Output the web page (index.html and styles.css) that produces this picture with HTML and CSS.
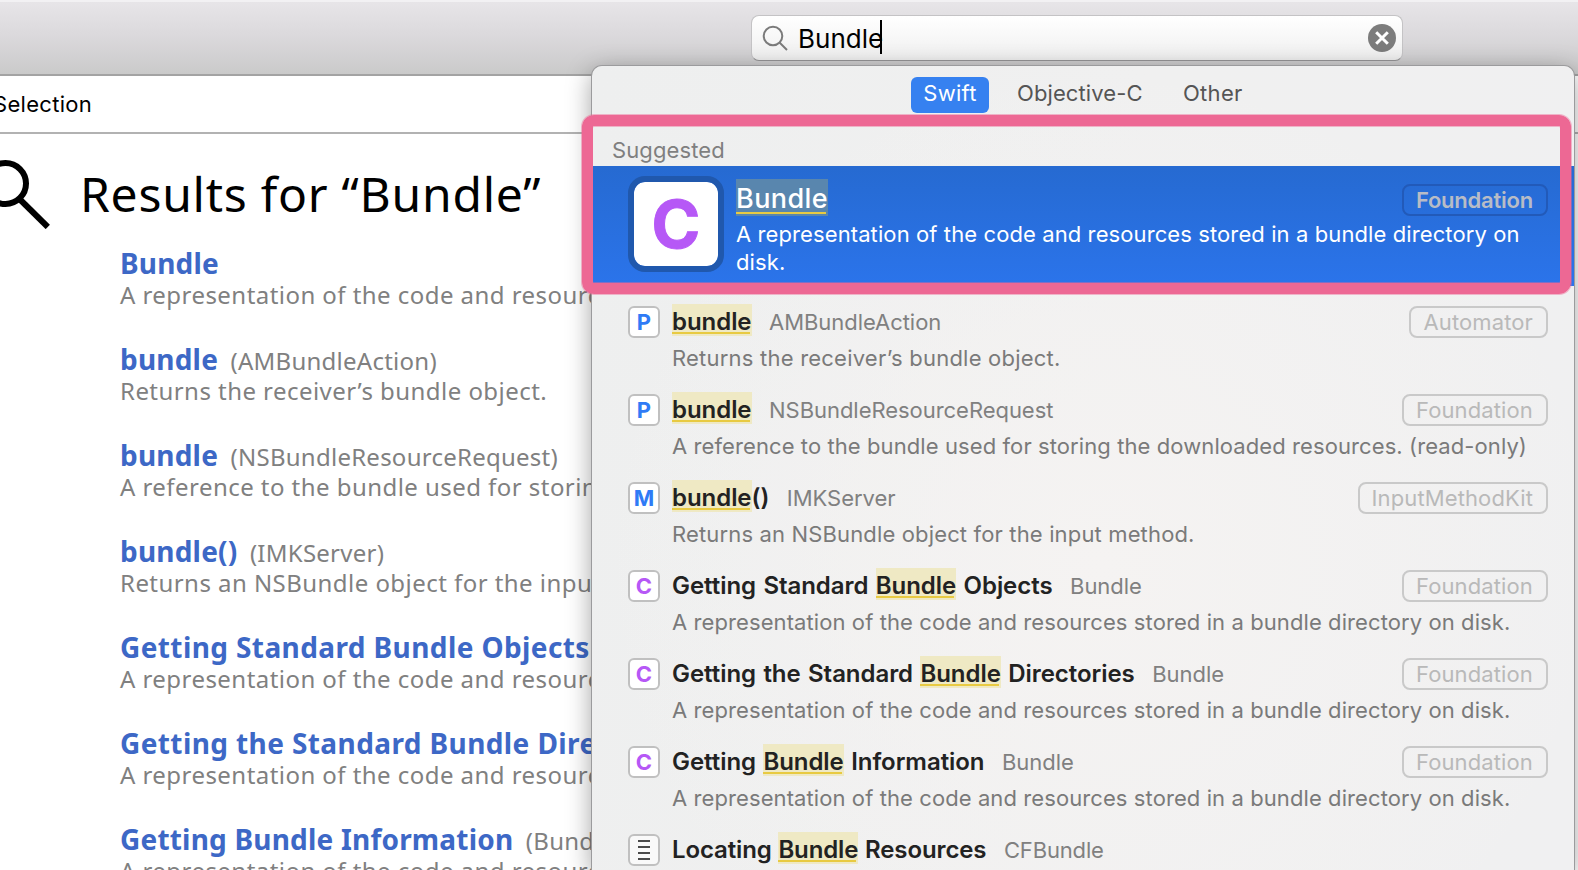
FILE: index.html
```html
<!DOCTYPE html>
<html lang="en">
<head>
<meta charset="utf-8">
<title>Results for “Bundle”</title>
<link rel="stylesheet" href="styles.css">
</head>
<body>
<header class="toolbar">
  <div class="search">
    <svg class="search-icon" width="28" height="28" viewBox="0 0 28 28" fill="none" stroke="#7b7b7b" stroke-width="2"><circle cx="11" cy="11" r="9.3"/><path d="M17.5 17.5 25 25"/></svg>
    <span class="query">Bundle</span><span class="caret"></span>
    <svg class="clear" width="28" height="28" viewBox="0 0 28 28"><circle cx="14" cy="14" r="14" fill="#7c7c7c"/><path d="M8.2 8.2l11.6 11.6M19.8 8.2l-11.6 11.6" stroke="#fff" stroke-width="3"/></svg>
  </div>
</header>
<nav class="pathbar">Selection</nav>
<main class="results">
  <div class="heading">
    <svg class="heading-icon" width="50" height="72" viewBox="0 0 50 72" fill="none" stroke="#000" stroke-width="6"><circle cx="5.5" cy="26.5" r="20.5"/><path d="M20.5 43 47.8 70"/></svg>
    <h1>Results for “Bundle”</h1>
  </div>
  <ul class="result-list">
    <li><h2>Bundle</h2><p>A representation of the code and resources</p></li>
    <li><h2>bundle <small>(AMBundleAction)</small></h2><p>Returns the receiver’s bundle object.</p></li>
    <li><h2>bundle <small>(NSBundleResourceRequest)</small></h2><p>A reference to the bundle used for storing</p></li>
    <li><h2>bundle() <small>(IMKServer)</small></h2><p>Returns an NSBundle object for the input</p></li>
    <li><h2 class="wide">Getting Standard Bundle Objects</h2><p>A representation of the code and resources</p></li>
    <li><h2 class="wide">Getting the Standard Bundle Directories</h2><p>A representation of the code and resources</p></li>
    <li><h2>Getting Bundle Information <small>(Bundle)</small></h2><p>A representation of the code and resources</p></li>
  </ul>
</main>

<section class="popup">
  <div class="tabs"><span class="tab active">Swift</span><span class="tab objc">Objective-C</span><span class="tab">Other</span></div>
  <div class="group">Suggested</div>
  <div class="selected">
    <div class="big-icon">C</div>
    <div class="sel-body">
      <div class="line"><span class="sel-name"><mark>Bundle</mark></span><span class="pill">Foundation</span></div>
      <p>A representation of the code and resources stored in a bundle directory on disk.</p>
    </div>
  </div>
  <div class="items">
    <div class="item"><i class="kind blue">P</i><div class="body"><div class="line"><b><mark>bundle</mark></b><span class="owner">AMBundleAction</span><span class="pill">Automator</span></div><p class="loose">Returns the receiver’s bundle object.</p></div></div>
    <div class="item"><i class="kind blue">P</i><div class="body"><div class="line"><b><mark>bundle</mark></b><span class="owner">NSBundleResourceRequest</span><span class="pill">Foundation</span></div><p>A reference to the bundle used for storing the downloaded resources. (read-only)</p></div></div>
    <div class="item"><i class="kind blue">M</i><div class="body"><div class="line"><b><mark>bundle</mark>()</b><span class="owner">IMKServer</span><span class="pill">InputMethodKit</span></div><p class="medium">Returns an NSBundle object for the input method.</p></div></div>
    <div class="item"><i class="kind purple">C</i><div class="body"><div class="line"><b>Getting Standard <mark>Bundle</mark> Objects</b><span class="owner">Bundle</span><span class="pill">Foundation</span></div><p>A representation of the code and resources stored in a bundle directory on disk.</p></div></div>
    <div class="item"><i class="kind purple">C</i><div class="body"><div class="line"><b>Getting the Standard <mark>Bundle</mark> Directories</b><span class="owner">Bundle</span><span class="pill">Foundation</span></div><p>A representation of the code and resources stored in a bundle directory on disk.</p></div></div>
    <div class="item"><i class="kind purple">C</i><div class="body"><div class="line"><b>Getting <mark>Bundle</mark> Information</b><span class="owner">Bundle</span><span class="pill">Foundation</span></div><p>A representation of the code and resources stored in a bundle directory on disk.</p></div></div>
    <div class="item last"><i class="kind list"><svg width="12" height="20" viewBox="0 0 12 20" stroke="#4a4a4a" stroke-width="2"><path d="M0 1h12M0 7h12M0 13h12M0 19h12"/></svg></i><div class="body"><div class="line"><b>Locating <mark>Bundle</mark> Resources</b><span class="owner">CFBundle</span></div></div></div>
  </div>
</section>
<div class="callout"></div>
</body>
</html>
```
FILE: styles.css
```css
* { box-sizing: border-box; }
html { overflow: hidden; }
body {
  margin: 0;
  width: 1578px;
  height: 870px;
  overflow: hidden;
  position: relative;
  background: #fff;
  font-family: Inter, sans-serif;
  font-size: 22px;
  white-space: nowrap;
}
h1, h2, p, ul { margin: 0; padding: 0; list-style: none; }

.toolbar {
  height: 76px;
  padding: 13px 0 0 751px;
  background: linear-gradient(#e7e5e8, #dad8db 50%, #cacaca);
  border-top: 2px solid #f2f1f3;
  border-bottom: 2px solid #a3a3a3;
}
.search {
  width: 652px;
  height: 46px;
  display: flex;
  align-items: center;
  padding: 0 6px 0 10px;
  background: linear-gradient(#fff, #efefef);
  border: 1px solid #c4c3c5;
  border-bottom-color: #959496;
  border-radius: 8px;
}
.search-icon { margin-top: 2px; }
.query { font-size: 26px; margin-left: 8px; padding-top: 2px; line-height: 32px; color: #000; }
.caret { width: 2px; height: 34px; background: #000; margin-left: -3px; margin-top: -2px; }
.clear { margin-left: auto; }

.pathbar {
  height: 58px;
  line-height: 56px;
  margin-left: -7px;
  letter-spacing: .3px;
  color: #000;
  border-bottom: 2px solid #b2b2b2;
}

.results {
  width: 592px;
  height: 736px;
  overflow: hidden;
  padding-top: 23px;
  font-family: "Noto Sans", sans-serif;
}
.heading { display: flex; align-items: flex-start; height: 88px; }
.heading h1 {
  font-size: 48px;
  font-weight: 400;
  line-height: 60px;
  letter-spacing: .75px;
  margin: 7px 0 0 30px;
}
.result-list { padding-left: 120px; }
.result-list li { height: 64px; margin-bottom: 32px; }
h2 { font-size: 28px; line-height: 36px; height: 36px; font-weight: 700; color: #3d68c6; letter-spacing: .2px; }
h2.wide { letter-spacing: .4px; }
h2 small { font-size: 24px; line-height: 1; font-weight: 400; color: #808080; margin-left: 5px; letter-spacing: .25px; }
.result-list p { font-size: 24px; line-height: 28px; color: #808080; letter-spacing: .45px; }

.popup {
  position: absolute;
  left: 592px;
  top: 66px;
  width: 982px;
  height: 804px;
  overflow: hidden;
  border-radius: 10px 10px 0 0;
  background: radial-gradient(500px 500px at 52% 62%, #f5f3f2, #f5f3f200), linear-gradient(100deg, #eeefef, #f0f0f0 50%, #f0f0f1);
  box-shadow: 0 0 0 1px #9b9b9d, 0 6px 26px rgba(0, 0, 0, .38);
}
.tabs { display: flex; padding: 11px 0 0 319px; height: 60px; }
.tab { height: 36px; line-height: 32px; border-radius: 6px; color: #555; letter-spacing: .3px; }
.tab.active { width: 78px; text-align: center; color: #fff; background: #3681f0; margin-right: 28px; }
.tab.objc { width: 166px; letter-spacing: .1px; }
.group { height: 40px; line-height: 48px; padding-left: 20px; color: #7f7f7f; letter-spacing: .1px; }

.selected {
  display: flex;
  height: 120px;
  padding: 10px 26px 0 36px;
  background: linear-gradient(#266ad1, #2b74eb);
  color: #fff;
}
.big-icon {
  width: 96px;
  height: 96px;
  border: 6px solid #2058ad;
  border-radius: 17px;
  background: #fff;
  background-clip: padding-box;
  color: #b658f6;
  font: 700 66px/84px Inter, sans-serif;
  -webkit-text-stroke: 1px #b658f6;
  text-align: center;
}
.sel-body { flex: 1; padding: 8px 0 0 12px; }
.sel-body p { white-space: normal; width: 800px; line-height: 28px; margin-top: 4px; letter-spacing: .1px; }
.line { display: flex; height: 32px; line-height: 32px; }
.sel-name { font-size: 27px; line-height: 30px; font-weight: 500; letter-spacing: .4px; }
mark {
  color: inherit;
  padding: 3px 0 0;
  background: linear-gradient(#e8ca42, #e8ca42) 0 calc(100% - 2px) / calc(100% - 2px) 2px no-repeat, #efe9c4;
}
.selected mark { padding: 3px 0 1px; background-color: #5986ae; }
.pill {
  margin-left: auto;
  height: 32px;
  line-height: 28px;
  padding: 0 13px 0 12px;
  border: 2px solid #c9c9c9;
  border-radius: 8px;
  color: #b9b9b9;
  letter-spacing: .12px;
}
.selected .pill { border-color: #225ab9; color: #b8bcc6; font-weight: 600; letter-spacing: -.22px; }

.items { padding-top: 20px; }
.item { display: flex; height: 88px; padding: 0 26px 0 36px; }
.item.last { height: 36px; }
.kind {
  width: 32px;
  height: 32px;
  border: 2px solid #c0c0c0;
  border-radius: 6px;
  background: #fff;
  font: 700 22px/28px Inter, sans-serif;
  text-align: center;
}
.blue { color: #2f7bf6; }
.purple { color: #b658f6; }
.list { display: flex; align-items: center; justify-content: center; background: #f9f9f9; }
.body { flex: 1; padding-left: 12px; }
.line b { font-size: 24px; font-weight: 600; color: #222; letter-spacing: -.05px; word-spacing: 1.4px; }
.last .line b { letter-spacing: -.12px; word-spacing: .8px; }
.owner { margin-left: 17.5px; color: #808080; letter-spacing: -.04px; }
.last .owner { letter-spacing: -.15px; }
.body p { margin-top: 4px; line-height: 32px; color: #7a7a7a; letter-spacing: .09px; }
.body p.loose { letter-spacing: .22px; }
.body p.medium { letter-spacing: .15px; }

.callout {
  position: absolute;
  left: 582px;
  top: 115px;
  width: 989px;
  height: 179px;
  border: 11px solid #ed6894;
  border-radius: 12px;
  box-shadow: 0 0 0 1px rgba(237, 104, 148, .45), inset 0 1px 0 rgba(237, 104, 148, .45), inset 0 -1px 0 rgba(237, 104, 148, .45);
}
```
